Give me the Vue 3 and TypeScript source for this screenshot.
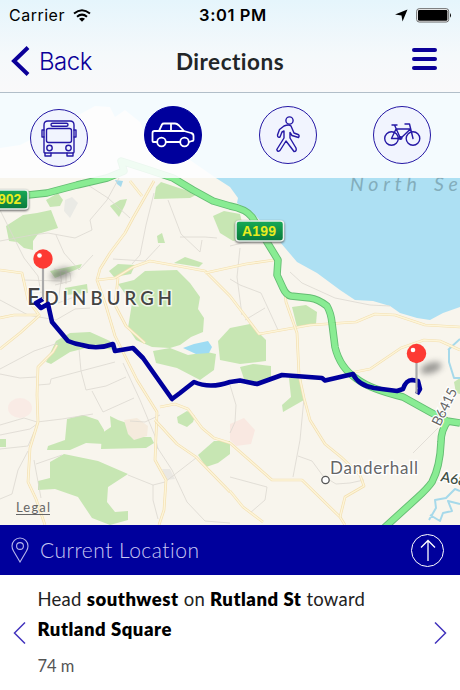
<script setup lang="ts">
import { ref } from 'vue'

type Mode = 'bus' | 'car' | 'walk' | 'bike'

const modes: Mode[] = ['bus', 'car', 'walk', 'bike']
const activeMode = ref<Mode>('car')

const parks = [
  'M6 226 23 215 37 213 51 210 58 228 38 234 33 241 33 250 24 248 17 242 9 241Z',
  'M46 200 58 193 63 200 60 206 50 207Z',
  'M110 206 120 200 127 199 125 205 119 217Z',
  'M154 199 156 187 161 182 176 187 198 194 190 198Z',
  'M213 216 224 211 240 214 246 239 233 241 220 233Z',
  'M157 236 162 233 165 243 158 243Z',
  'M174 263 185 257 203 263 199 267Z',
  'M109 271 118 264 135 265 131 274 114 277Z',
  'M50 271 82 264 80 268 55 278Z',
  'M65 288 87 284 88 293 65 295Z',
  'M118 284 134 280 145 271 177 270 190 283 200 297 198 309 204 318 203 332 191 337 180 345 170 348 152 347 136 340 128 328 132 303Z',
  'M56 341 70 333 90 332 110 341 115 350 90 347 70 352 51 364 46 362Z',
  'M153 351 170 348 188 355 207 352 216 354 214 370 200 380 177 368 156 363Z',
  'M218 341 230 328 250 324 266 340 266 361 240 364 220 360Z',
  'M292 307 306 305 317 312 316 324 297 327Z',
  'M240 367 253 364 271 366 271 378 260 384 244 379Z',
  'M289 378 301 378 304 400 283 412 282 405 291 397Z',
  'M67 419 83 415 98 420 104 430 104 444 86 443 70 450 47 450 48 446 65 440Z',
  'M102 433 111 427 110 416 118 420 127 423 133 437 151 437 154 443 146 448 101 449Z',
  'M177 417 187 411 195 416 193 422 187 427 178 423Z',
  'M198 455 214 441 230 441 230 454 218 463 206 467Z',
  'M50 462 64 454 98 461 128 474 108 487 107 502 115 512 128 511 128 520 110 525 92 518 78 497 55 489 38 490 38 481 50 478Z',
  'M0 439 6 439 6 447 0 447Z',
  'M454 382 460 378 460 394 456 393Z',
]

const lanes = [
  'M0 241 32 235 48 233 75 238 92 230 90 220 107 200 119 178',
  'M0 210 14 238 24 258 38 276 41 293',
  'M56 235 64 253 79 270 93 255',
  'M80 180 108 198 130 218',
  'M154 193 146 225 140 255 132 264',
  'M113 259 145 261 160 245',
  'M180 237 205 237 217 238',
  'M168 200 181 234 200 252 202 240',
  'M22 280 61 281 58 303 88 292',
  'M0 369 34 351 58 343',
  'M0 374 20 378 36 377',
  'M38 385 50 384 51 379 81 371 79 349',
  'M81 371 115 362 M81 371 86 390 106 386 126 377',
  'M92 391 103 412 134 398 M123 363 140 400 155 436 158 449',
  'M0 425 24 418 37 422 62 419 93 414',
  'M0 435 30 429 37 424 M0 449 28 446 34 432',
  'M0 499 12 494 18 470 28 451 M34 460 41 498',
  'M36 464 62 455 M128 475 153 485 165 482 196 458',
  'M153 485 153 500 158 519 M157 447 172 470 187 502 205 521 230 523',
  'M130 421 145 422 160 415',
  'M304 398 300 440 293 477',
  'M298 456 312 461 323 476 336 484 350 483 364 480',
  'M230 385 236 405 235 422 230 433',
  'M230 477 267 487 265 500 250 513',
  'M413 453 438 428',
  'M230 246 242 243 255 241',
  'M240 248 237 277 242 315',
  'M230 279 240 285 261 293 278 330',
  'M245 320 265 308',
  'M290 272 302 283 335 298 370 305 390 306',
  'M0 300 28 315 56 320 75 309 90 308',
  'M54 269 70 273 71 281 55 285',
  'M60 271 62 284 M66 270 66 284',
]

const roads = [
  'M154 181 145 197 133 218 125 233 110 253 100 269 97 280 106 306 115 336 137 380 157 412 155 460 166 480 164 510 159 525',
  'M97 280 115 278 133 267 150 261 178 266 205 271 230 296 243 313 259 334 310 325 356 322 375 314 395 315 425 325 460 327',
  'M130 181 142 196',
  'M57 345 53 352 38 367 37 395 38 422 30 448 28 482 36 499 45 525',
  'M0 270 22 273 28 300 39 315 14 315 0 318',
  'M40 315 20 333 0 349',
  'M155 420 177 444 196 457 230 492',
  'M160 407 175 404 188 409 202 428 214 438 230 443 272 480 302 480 340 517 345 525',
  'M340 517 345 497 364 486 360 475 341 457 325 444 310 420 304 398 299 375 297 333 286 302 285 293',
  'M205 273 246 264 274 260',
  'M345 374 370 369 401 348 424 340 440 341 460 350',
  'M230 491 243 507 263 522',
  'M118 278 115 305 126 326 145 343',
]

const trunks = [
  'M0 197 28 195 47 193 77 185 107 178 124 171 121 161 146 169 173 178 193 190 213 201 230 206 Q246 209 252 217 L267 242 278 260 277 275 283 288 Q286 295 291 296 L310 298 Q318 299 327 306 Q331 313 332 323 L335 347 Q340 368 357 379 Q370 389 403 397 L430 412 447 421 460 423',
  'M448 421 Q441 430 441 442 Q440 467 432 482 Q428 488 417 498 L384 528',
]

const route =
  'M43 299 36 303 41 308 48 304 52 322 68 341 Q75 344 82 345 Q97 350 113 344 L115 351 133 348 143 358 172 399 180 393 194 382 Q210 389 230 382 L240 380.5 257 384 282 375 322 378 325 380.5 353 374 Q358 385 374 388 L397 391 403 389 Q406 380 412 380 L418 381 420 389 417 394'

const pins = [
  { x: 43, y: 259, shadowX: 61, shadowY: 274 },
  { x: 416.5, y: 353.5, shadowX: 431, shadowY: 368 },
]
</script>

<template>
  <main class="screen">
    <div class="stage">
      <svg class="map" viewBox="0 0 460 525">
        <defs>
          <linearGradient id="sign" x1="0" y1="0" x2="0" y2="1">
            <stop offset="0" stop-color="#18a956" />
            <stop offset="1" stop-color="#077a3b" />
          </linearGradient>
          <filter id="soft" x="-50%" y="-100%" width="200%" height="300%">
            <feGaussianBlur stdDeviation="3" />
          </filter>
        </defs>

        <rect width="460" height="525" fill="#f8f5ed" />
        <path
          d="M0 0H460V307L443 313 430 320 417 318 400 313 390 306 373 301 355 300 340 290 317 273 297 262 280 242 253 213 237 203 238 198 230 187 216 178 190 160 150 145 140 122 125 110 115 117 110 107 95 106 60 125 20 145 0 148Z"
          fill="#ade0f3"
        />
        <ellipse cx="20" cy="408" rx="12" ry="10" fill="#f9ebe5" />
        <path d="M230 424 244 418 255 430 251 444 236 446 230 440Z" fill="#f9e8e1" />
        <path d="M65 200 72 197 78 203 70 218 64 211Z" fill="#eaeae5" />
        <path d="M162 469 170 469 175 479 166 480Z" fill="#eae8e3" />
        <path v-for="d in parks" :key="d" :d="d" class="park" />
        <path d="M124 420 137 418 148 426 147 436 134 440 128 434Z" fill="#f5ebdd" />
        <path d="M183 348 194 344 208 341 212 347 209 353 196 354Z" fill="#9edcf3" />
        <path d="M115 180 123 181 121 187 117 184Z" fill="#a6daec" />
        <path d="M449 349 449 362 454 378 460 378 M448 350 460 339" class="stream" />
        <path d="M460 491 455 489 446 498 435 500 436 508 429 520 M430 515 440 521 443 513 452 511 448 501 460 504" class="stream" />
        <path v-for="d in lanes" :key="d" :d="d" class="lane" />
        <g v-for="d in roads" :key="d">
          <path :d="d" class="road-edge" />
          <path :d="d" class="road" />
        </g>
        <path v-for="d in trunks" :key="d" :d="d" class="trunk-edge" />
        <path v-for="d in trunks" :key="d" :d="d" class="trunk" />

        <text x="350" y="191" class="sea-name">North Se</text>
        <text x="27" y="305" class="city" textLength="145"><tspan font-size="23">E</tspan>DINBURGH</text>
        <text x="330" y="474" class="town" textLength="88">Danderhall</text>
        <circle cx="325.5" cy="480" r="3.7" fill="#fff" stroke="#555" stroke-width="1.3" />
        <text transform="translate(440 427) rotate(-64)" class="road-name" textLength="40">B6415</text>
        <text transform="translate(440 481) rotate(12)" class="road-name bold">A68</text>

        <g class="sign">
          <rect x="-14" y="190" width="42" height="19" rx="3" />
          <text x="-2" y="204">902</text>
          <rect x="236" y="221" width="47.500" height="20" rx="3" />
          <text x="242" y="236" textLength="34">A199</text>
        </g>

        <path :d="route" class="route" />

        <g v-for="pin in pins" :key="pin.x">
          <ellipse
            :cx="pin.shadowX"
            :cy="pin.shadowY"
            rx="11"
            ry="5"
            fill="#555"
            opacity=".6"
            filter="url(#soft)"
            :transform="`rotate(-18 ${pin.shadowX} ${pin.shadowY})`"
          />
          <path :d="`M${pin.x} ${pin.y + 8}v32`" stroke="#aaa" stroke-width="2.200" />
          <circle :cx="pin.x" :cy="pin.y" r="9.700" fill="#fd3a33" />
          <circle :cx="pin.x - 3.500" :cy="pin.y - 3.500" r="2.300" fill="#fff" />
        </g>

        <text x="16" y="512" class="legal" textLength="34">Legal</text>
        <path d="M16 514.500H50" stroke="#666" />
      </svg>

      <div class="top">
        <header class="header">
          <div class="status">
            <span class="carrier">
              Carrier
              <svg width="18" height="13" viewBox="0 0 18 13">
                <path d="M1 4.500Q9-2 17 4.500M4 7.700Q9 3.500 14 7.700" fill="none" stroke="#000" stroke-width="2" />
                <path d="M6 9.800Q9 7.500 12 9.800L9 12.800Z" />
              </svg>
            </span>
            <span class="time">3:01 PM</span>
            <span class="indicators">
              <svg width="13" height="13" viewBox="0 0 13 13"><path d="M12.500.500 7.500 12.500 6.500 6.500 0 5.500Z" /></svg>
              <svg width="36" height="15" viewBox="0 0 36 15">
                <rect x=".700" y=".700" width="32" height="13.300" rx="2.500" fill="#fff" stroke="#666" />
                <rect x="2" y="2" width="29.400" height="10.700" rx="1.300" />
                <path d="M34 5q2 2.400 0 4.800Z" />
              </svg>
            </span>
          </div>
          <nav class="nav">
            <button class="back">
              <svg width="19" height="30" viewBox="0 0 19 30"><path d="M17 1.500 3 15 17 28.500" /></svg>
              <span>Back</span>
            </button>
            <h1>Directions</h1>
            <button class="menu" aria-label="Menu"><i /><i /><i /></button>
          </nav>
        </header>

        <div class="modes">
          <button
            v-for="mode in modes"
            :key="mode"
            class="mode"
            :class="[mode, { active: mode === activeMode }]"
            :aria-label="mode"
            @click="activeMode = mode"
          >
            <svg v-if="mode === 'bus'" width="38" height="38" viewBox="0 0 38 38">
              <path d="M4 33V6Q4 2 8 2H30Q34 2 34 6V33Q34 34 33 34H5Q4 34 4 33Z" />
              <rect x="6.500" y="9.500" width="25" height="14" rx="2" />
              <rect x="11" y="4.300" width="17" height="3" rx="1.500" />
              <path d="M4 11H2V18H4M34 11H36V18H34M5 34V37H11V34M27 34V37H33V34" />
              <circle cx="9.500" cy="29" r="2.700" />
              <circle cx="28.500" cy="29" r="2.700" />
            </svg>
            <svg v-else-if="mode === 'car'" width="44" height="28" viewBox="0 0 44 28">
              <path d="M5.500 21H2.500Q1.500 21 1.500 20V12Q1.500 10 3.500 10H8L11 3.500Q11.500 2.500 13 2.500H24Q26 2.500 28 4.500L33 10 40 12Q42.500 12.500 42.500 15V19Q42.500 20 41 20L38 21M15 21H29M8 10H33M20 3V10" />
              <circle cx="10.500" cy="21" r="4.300" />
              <circle cx="33.500" cy="21" r="4.300" />
            </svg>
            <svg v-else-if="mode === 'walk'" width="24" height="38" viewBox="0 0 24 38">
              <circle cx="13.500" cy="4.500" r="3.600" />
              <path d="M8 10Q13 8 15 10L18 17 22 18.500Q24 19.500 22.500 21.500L16 19.500 14 16.500 14 22 20 32Q21 35.500 18 35.500L10 25 4 34.500Q1.500 36.500.800 33.500L8 22 8 15 6 16 4 21Q1.500 22 1.500 19L3.500 13.500Z" />
            </svg>
            <svg v-else width="38" height="26" viewBox="0 0 38 26">
              <circle cx="8.500" cy="16.500" r="6.800" />
              <circle cx="30" cy="16.500" r="6.800" />
              <path d="M9 3H14M11.500 3 17.500 16.500 27.500 7H13L8.500 16.500H17M22 2H26.500L30 16.500" />
              <circle cx="17.500" cy="16" r="1.400" />
            </svg>
          </button>
        </div>
      </div>
    </div>

    <section class="location">
      <svg width="18" height="26" viewBox="0 0 18 26">
        <path d="M9 25 2.500 14Q1 11.500 1 9A8 8 0 0 1 17 9Q17 11.500 15.500 14Z" />
        <circle cx="9" cy="9" r="3.400" />
      </svg>
      <span>Current Location</span>
      <button class="up" aria-label="Expand">
        <svg width="16" height="23" viewBox="0 0 16 23"><path d="M8 22V1.500M1 8.500 8 1.500 15 8.500" /></svg>
      </button>
    </section>

    <section class="step">
      <button class="arrow" aria-label="Previous">
        <svg width="13" height="22" viewBox="0 0 13 22"><path d="M12 .500 1.500 11 12 21.500" /></svg>
      </button>
      <div class="instruction">
        <p>
          <span class="line">Head <b>southwest</b> on <b>Rutland St</b> toward</span>
          <span class="line"><b>Rutland Square</b></span>
        </p>
        <span class="distance">74 m</span>
      </div>
      <button class="arrow" aria-label="Next">
        <svg width="13" height="22" viewBox="0 0 13 22"><path d="M1 .500 11.500 11 1 21.500" /></svg>
      </button>
    </section>
  </main>
</template>

<style>
body {
  margin: 0;
  background: #fff;
}
</style>

<style scoped>
.screen {
  width: 460px;
  height: 690px;
  overflow: hidden;
  background: #fff;
  font-family: Lato, 'Open Sans', sans-serif;
  font-variant-ligatures: none;
}
svg {
  display: block;
  flex: none;
}
button {
  border: none;
  background: none;
  padding: 0;
  font: inherit;
  cursor: pointer;
}
.stage {
  display: grid;
  height: 525px;
}
.map,
.top {
  grid-area: 1 / 1;
}
.map {
  width: 460px;
  height: 525px;
}
.top {
  z-index: 1;
  height: 178px;
}

.park {
  fill: #c7e6b3;
}
.stream,
.lane,
.road,
.road-edge,
.trunk,
.trunk-edge,
.route {
  fill: none;
  stroke-linejoin: round;
}
.stream {
  stroke: #a6d9ea;
  stroke-width: 2;
}
.lane {
  stroke: #dcd8d1;
  stroke-width: 0.8;
}
.road-edge {
  stroke: #f3dfb0;
  stroke-width: 2.7;
}
.road {
  stroke: #fdf5d9;
  stroke-width: 1.4;
}
.trunk-edge {
  stroke: #65bd73;
  stroke-width: 7.5;
}
.trunk {
  stroke: #89ec93;
  stroke-width: 5.7;
}
.route {
  stroke: #00009c;
  stroke-width: 4.6;
}
.sea-name {
  font-size: 19.5px;
  font-style: italic;
  letter-spacing: 4.8px;
  word-spacing: 3px;
  fill: #83adbb;
}
.city {
  font-size: 18.5px;
  font-weight: 600;
  fill: #444;
  stroke: #fff;
  stroke-opacity: 0.75;
  stroke-width: 3;
  paint-order: stroke;
}
.town,
.road-name {
  font-size: 17px;
  fill: #666;
  stroke: #fff;
  stroke-width: 2.5;
  paint-order: stroke;
}
.road-name {
  font-size: 14px;
}
.road-name.bold {
  font-weight: 600;
  fill: #3f5145;
}
.sign rect {
  fill: url(#sign);
  stroke: #e9f1eb;
  stroke-width: 1.5;
  filter: drop-shadow(0 1px 1px #555);
}
.sign text {
  font: bold 14px 'Liberation Sans', sans-serif;
  fill: #e8ec20;
}
.legal {
  font-size: 13px;
  fill: #666;
}

.header {
  box-sizing: border-box;
  height: 93px;
  background: linear-gradient(#e5f5fc, #f5f9fb 60%, #f9f9fa);
  border-bottom: 1px solid #b1bec9;
}
.status {
  display: grid;
  grid-template-columns: 1fr auto 1fr;
  align-items: center;
  height: 30px;
  padding: 0 8px 0 9px;
  font: 16px Inter, sans-serif;
}
.carrier,
.indicators {
  display: flex;
  align-items: center;
  gap: 8px;
}
.carrier {
  letter-spacing: 0.5px;
}
.time {
  padding-left: 5px;
  font-size: 16.5px;
  font-weight: 600;
  letter-spacing: 0.6px;
}
.indicators {
  justify-content: flex-end;
}
.nav {
  display: grid;
  grid-template-columns: 1fr auto 1fr;
  align-items: center;
  height: 62px;
  padding: 0 23px 0 11px;
}
.back {
  display: flex;
  align-items: center;
  gap: 9px;
  color: #0b0099;
  font: 300 24px Inter, sans-serif;
  letter-spacing: -0.5px;
}
.back path {
  fill: none;
  stroke: #0b0099;
  stroke-width: 4;
}
h1 {
  margin: 0;
  padding-left: 12px;
  color: #222628;
  font-size: 22.5px;
  font-weight: 700;
  letter-spacing: 0.5px;
}
.menu {
  display: flex;
  flex-direction: column;
  justify-self: end;
  gap: 5px;
  width: 25px;
  margin-top: -4px;
}
.menu i {
  height: 3.7px;
  border-radius: 2px;
  background: #0b0099;
}

.modes {
  display: flex;
  justify-content: space-between;
  align-items: flex-start;
  box-sizing: border-box;
  height: 85px;
  padding: 13px 29px 0 30px;
  background: rgba(253, 254, 255, 0.89);
}
.mode {
  display: grid;
  place-items: center;
  box-sizing: border-box;
  width: 58px;
  height: 58px;
  border: 1.6px solid #2518a5;
  border-radius: 50%;
  background: #f1f4fe;
}
.bus {
  margin-top: 3px;
}
.mode path,
.mode rect,
.mode circle {
  fill: none;
  stroke: #2518a5;
  stroke-width: 1.4;
  stroke-linejoin: round;
  stroke-linecap: round;
}
.mode.active {
  background: #00009c;
  border-color: #00009c;
}
.mode.active path,
.mode.active circle {
  stroke: #fff;
  stroke-width: 1.8;
}

.location {
  display: flex;
  align-items: center;
  box-sizing: border-box;
  height: 50px;
  padding: 0 16px 0 11px;
  background: #00009c;
  color: #c9c9f3;
  font-size: 21px;
  font-weight: 300;
  letter-spacing: 0.5px;
}
.location > span {
  flex: 1;
  margin: -2px 0 0 11px;
}
.location path,
.location circle {
  fill: none;
  stroke: #b6b6ec;
  stroke-width: 1.1;
}
.location .up path {
  stroke: #fff;
  stroke-width: 1.3;
}
.up {
  display: grid;
  place-items: center;
  box-sizing: border-box;
  width: 33px;
  height: 33px;
  border: 1.5px solid #fff;
  border-radius: 50%;
}

.step {
  display: flex;
  align-items: center;
  height: 115px;
  padding: 0 13px;
}
.arrow path {
  fill: none;
  stroke: #4334bd;
  stroke-width: 1.5;
}
.instruction {
  flex: 1;
  margin: -4px 0 0 11.5px;
  color: #222;
  font-size: 18.5px;
  letter-spacing: 0.25px;
  white-space: nowrap;
}
.instruction p {
  margin: 0 0 11px;
}
.line {
  display: block;
  height: 30px;
  line-height: 30px;
}
b {
  color: #000;
  font-weight: 800;
  letter-spacing: 0.52px;
}
.distance {
  display: block;
  color: #555;
  font-size: 16.5px;
  letter-spacing: 0;
  line-height: 22px;
}
</style>
